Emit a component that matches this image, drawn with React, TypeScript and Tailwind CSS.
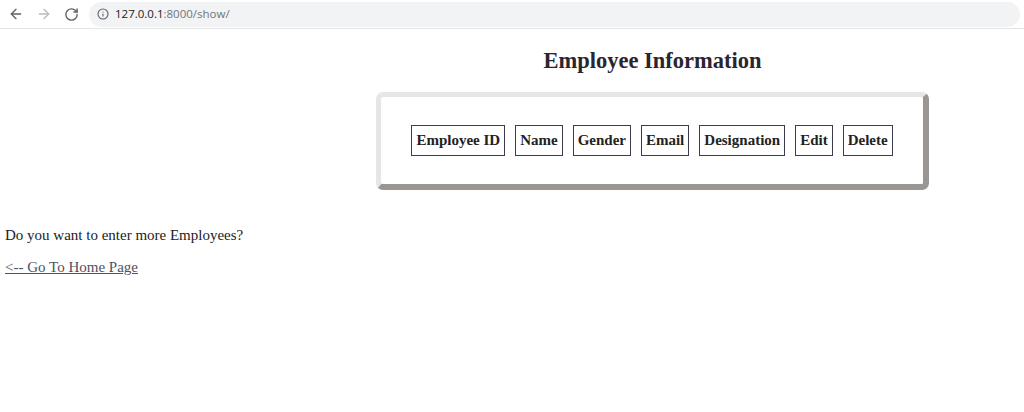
import { ArrowLeft, ArrowRight, RotateCw, Info } from "lucide-react";

const columns = ["Employee ID", "Name", "Gender", "Email", "Designation", "Edit", "Delete"];

const BrowserBar = () => {
  return (
    <div className="flex items-center h-[29px] border-b border-[#e5e5e5] bg-white">
      <div className="flex items-center gap-[12px] pl-[8px] pr-[10px] text-[#5f6368]">
        <ArrowLeft size={16} strokeWidth={2} />
        <ArrowRight size={16} strokeWidth={2} className="text-[#b8bcc0]" />
        <RotateCw size={15} strokeWidth={2.2} />
      </div>
      <div className="flex items-center flex-1 h-[25px] mr-[4px] rounded-full bg-[#f1f3f4] pl-[8px] gap-[6px] font-['Open_Sans',sans-serif] text-[11.5px]">
        <Info size={12} strokeWidth={2.2} className="text-[#5f6368]" />
        <span>
          <span className="text-[#202124]">127.0.0.1</span>
          <span className="text-[#70757a]">:8000/show/</span>
        </span>
      </div>
    </div>
  );
};

const App = () => {
  return (
    <div className="min-h-[412px] bg-white font-['Liberation_Serif',serif] text-[#222]">
      <BrowserBar />

      <div className="ml-[376px] w-[553px]">
        <h1 className="text-center font-bold text-[22.5px] text-[#2a2530] mt-[18px] mb-[17px] leading-[28px]">
          Employee Information
        </h1>

        {/* table card */}
        <div className="rounded-[7px] border-[5px] border-t-[#e6e6e6] border-l-[#e6e6e6] border-b-[6px] border-r-[6px] border-b-[#9b9692] border-r-[#9b9692] bg-white py-[28px] flex justify-center">
          <div className="flex gap-[10px]">
            {columns.map((col) => (
              <div
                key={col}
                className="border border-[#3b3a4e] h-[31px] px-[4px] flex items-center font-bold text-[15px] text-[#222]"
              >
                {col}
              </div>
            ))}
          </div>
        </div>
      </div>

      <div className="px-[5px] text-[15px] mt-[36px]">
        <p className="leading-[18px]">Do you want to enter more Employees?</p>
        <a href="#" className="block mt-[14px] leading-[18px] underline text-[#4b5366]">
          &lt;-- Go To Home Page
        </a>
      </div>
    </div>
  );
};

export default App;
